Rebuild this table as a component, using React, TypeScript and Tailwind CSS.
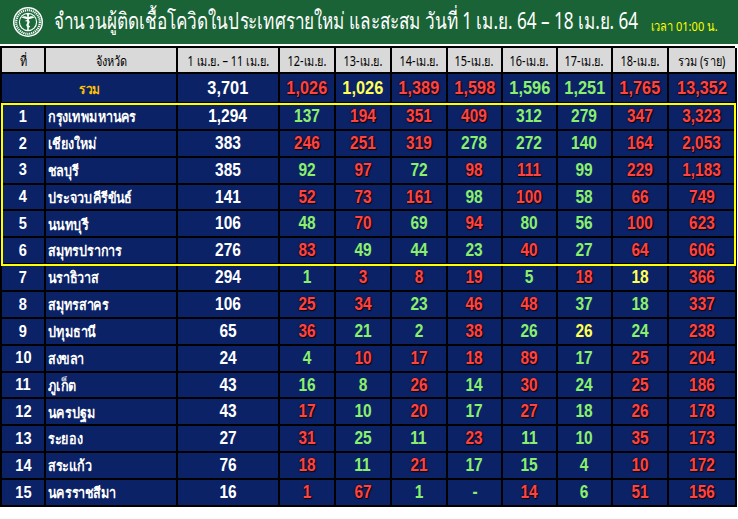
import React from 'react';

type C = 'r' | 'g' | 'y' | 'w';
type Row = { no: number; name: string; base: string; days: [string, C][]; total: string };

const rows: Row[] = [
  { no: 1, name: 'กรุงเทพมหานคร', base: '1,294', days: [['137', 'g'], ['194', 'r'], ['351', 'r'], ['409', 'r'], ['312', 'g'], ['279', 'g'], ['347', 'r']], total: '3,323' },
  { no: 2, name: 'เชียงใหม่', base: '383', days: [['246', 'r'], ['251', 'r'], ['319', 'r'], ['278', 'g'], ['272', 'g'], ['140', 'g'], ['164', 'r']], total: '2,053' },
  { no: 3, name: 'ชลบุรี', base: '385', days: [['92', 'g'], ['97', 'r'], ['72', 'g'], ['98', 'r'], ['111', 'r'], ['99', 'g'], ['229', 'r']], total: '1,183' },
  { no: 4, name: 'ประจวบคีรีขันธ์', base: '141', days: [['52', 'r'], ['73', 'r'], ['161', 'r'], ['98', 'g'], ['100', 'r'], ['58', 'g'], ['66', 'r']], total: '749' },
  { no: 5, name: 'นนทบุรี', base: '106', days: [['48', 'g'], ['70', 'r'], ['69', 'g'], ['94', 'r'], ['80', 'g'], ['56', 'g'], ['100', 'r']], total: '623' },
  { no: 6, name: 'สมุทรปราการ', base: '276', days: [['83', 'r'], ['49', 'g'], ['44', 'g'], ['23', 'g'], ['40', 'r'], ['27', 'g'], ['64', 'r']], total: '606' },
  { no: 7, name: 'นราธิวาส', base: '294', days: [['1', 'g'], ['3', 'r'], ['8', 'r'], ['19', 'r'], ['5', 'g'], ['18', 'r'], ['18', 'y']], total: '366' },
  { no: 8, name: 'สมุทรสาคร', base: '106', days: [['25', 'r'], ['34', 'r'], ['23', 'g'], ['46', 'r'], ['48', 'r'], ['37', 'g'], ['18', 'g']], total: '337' },
  { no: 9, name: 'ปทุมธานี', base: '65', days: [['36', 'r'], ['21', 'g'], ['2', 'g'], ['38', 'r'], ['26', 'g'], ['26', 'y'], ['24', 'g']], total: '238' },
  { no: 10, name: 'สงขลา', base: '24', days: [['4', 'g'], ['10', 'r'], ['17', 'r'], ['18', 'r'], ['89', 'r'], ['17', 'g'], ['25', 'r']], total: '204' },
  { no: 11, name: 'ภูเก็ต', base: '43', days: [['16', 'g'], ['8', 'g'], ['26', 'r'], ['14', 'g'], ['30', 'r'], ['24', 'g'], ['25', 'r']], total: '186' },
  { no: 12, name: 'นครปฐม', base: '43', days: [['17', 'r'], ['10', 'g'], ['20', 'r'], ['17', 'g'], ['27', 'r'], ['18', 'g'], ['26', 'r']], total: '178' },
  { no: 13, name: 'ระยอง', base: '27', days: [['31', 'r'], ['25', 'g'], ['11', 'g'], ['23', 'r'], ['11', 'g'], ['10', 'g'], ['35', 'r']], total: '173' },
  { no: 14, name: 'สระแก้ว', base: '76', days: [['18', 'r'], ['11', 'g'], ['21', 'r'], ['17', 'g'], ['15', 'g'], ['4', 'g'], ['10', 'r']], total: '172' },
  { no: 15, name: 'นครราชสีมา', base: '16', days: [['1', 'r'], ['67', 'r'], ['1', 'g'], ['-', 'g'], ['14', 'r'], ['6', 'g'], ['51', 'r']], total: '156' },
];

const summary: [string, C][] = [
  ['1,026', 'r'], ['1,026', 'y'], ['1,389', 'r'], ['1,598', 'r'], ['1,596', 'g'], ['1,251', 'g'], ['1,765', 'r'],
];

const heads = ['12-เม.ย.', '13-เม.ย.', '14-เม.ย.', '15-เม.ย.', '16-เม.ย.', '17-เม.ย.', '18-เม.ย.'];

const tone: Record<C, string> = {
  r: 'text-[#ff4343] [text-shadow:0_0_2px_#2a0000,1px_1px_1px_#000]',
  g: 'text-[#8af06c]',
  y: 'text-[#ffff55]',
  w: 'text-white',
};

const cols = 'grid grid-cols-[44px_132px_102px_56px_56px_56px_55px_55px_55px_56px_68px]';
const cell = 'border-r-2 border-b-2 border-black flex items-center justify-center overflow-hidden whitespace-nowrap';
const num = "font-bold [font-family:'Liberation_Sans',Arial,sans-serif]";
const thai = "[font-family:'Noto_Sans','DejaVu_Sans',sans-serif]";

function N({ v, c }: { v: string; c: C }) {
  return <span className={`inline-block scale-x-[0.86] ${tone[c]}`}>{v}</span>;
}

function H({ t }: { t: string }) {
  return <span className="inline-block scale-x-[0.78]">{t}</span>;
}

function Logo() {
  return (
    <svg width="32" height="32" viewBox="0 0 32 32" className="shrink-0">
      <circle cx="16" cy="16" r="15" fill="#ffffff" />
      <circle cx="16" cy="16" r="13.5" fill="#1a6a3a" />
      <circle cx="16" cy="16" r="11.8" fill="none" stroke="#ffffff" strokeWidth="2.2" strokeDasharray="1.2 0.8" />
      <circle cx="16" cy="16" r="9.2" fill="#ffffff" />
      <circle cx="16" cy="16" r="8" fill="#1a6a3a" />
      <path d="M16 8.5 V24" stroke="#fff" strokeWidth="1.6" />
      <path d="M16 11.5 C13 9.5 11 10 9.5 11.5 C11.5 12 13.5 13 16 13.5 Z" fill="#fff" />
      <path d="M16 11.5 C19 9.5 21 10 22.5 11.5 C20.5 12 18.5 13 16 13.5 Z" fill="#fff" />
      <path d="M13.5 15 C16 14 18.5 15.5 16 17.5 C13.5 19.5 16 21 18 20.5" fill="none" stroke="#fff" strokeWidth="1.3" />
      <circle cx="16" cy="8.5" r="1.2" fill="#fff" />
    </svg>
  );
}

export default function App() {
  return (
    <div className={`w-[738px] h-[519px] bg-white overflow-hidden ${thai}`}>
      <div className="h-[44px] bg-[#1a6336] flex items-center pl-[12px]">
        <Logo />
        <div className="ml-[10px] w-[597px] shrink-0 whitespace-nowrap">
          <span className="inline-block origin-left scale-x-[0.745] text-white text-[23px] leading-none">
            จำนวนผู้ติดเชื้อโควิดในประเทศรายใหม่ และสะสม วันที่ 1 เม.ย. 64 – 18 เม.ย. 64
          </span>
        </div>
        <div className="mt-[6px] whitespace-nowrap">
          <span className="inline-block origin-left scale-x-[0.85] text-[#ffff00] text-[13px] leading-none">เวลา 01:00 น.</span>
        </div>
      </div>

      <div className="mt-[2px] w-[735px] border-l-2 border-t-2 border-black">
        <div className={`${cols} h-[26px] bg-[#d9d9d9] text-black text-[14px]`}>
          <div className={cell}><H t="ที่" /></div>
          <div className={cell}><H t="จังหวัด" /></div>
          <div className={cell}><H t="1 เม.ย. – 11 เม.ย." /></div>
          {heads.map((h) => (
            <div key={h} className={cell}><H t={h} /></div>
          ))}
          <div className={cell}><H t="รวม (ราย)" /></div>
        </div>

        <div className={`${cols} h-[30px] bg-[#0b2266] text-[19px] ${num}`}>
          <div className={`${cell} col-span-2 ${thai}`}>
            <span className="inline-block scale-x-[0.85] text-[#ffc000] text-[14px] font-bold">รวม</span>
          </div>
          <div className={cell}><N v="3,701" c="w" /></div>
          {summary.map(([v, c], i) => (
            <div key={i} className={cell}><N v={v} c={c} /></div>
          ))}
          <div className={cell}><N v="13,352" c="r" /></div>
        </div>

        <div className="outline-2 -outline-offset-1 outline-[#ffff00]">
          {rows.slice(0, 6).map((r) => <DataRow key={r.no} r={r} />)}
        </div>
        {rows.slice(6).map((r) => <DataRow key={r.no} r={r} />)}
      </div>
    </div>
  );
}

function DataRow({ r }: { r: Row }) {
  return (
    <div className={`${cols} h-[26.87px] bg-[#0b2266] text-[18px] ${num}`}>
      <div className={`${cell} text-[17px]`}><N v={String(r.no)} c="w" /></div>
      <div className={`${cell} justify-start pl-[2px] ${thai}`}>
        <span className="inline-block origin-left scale-x-[0.84] text-white text-[15px] font-bold">{r.name}</span>
      </div>
      <div className={cell}><N v={r.base} c="w" /></div>
      {r.days.map(([v, c], i) => (
        <div key={i} className={cell}><N v={v} c={c} /></div>
      ))}
      <div className={cell}><N v={r.total} c="r" /></div>
    </div>
  );
}
